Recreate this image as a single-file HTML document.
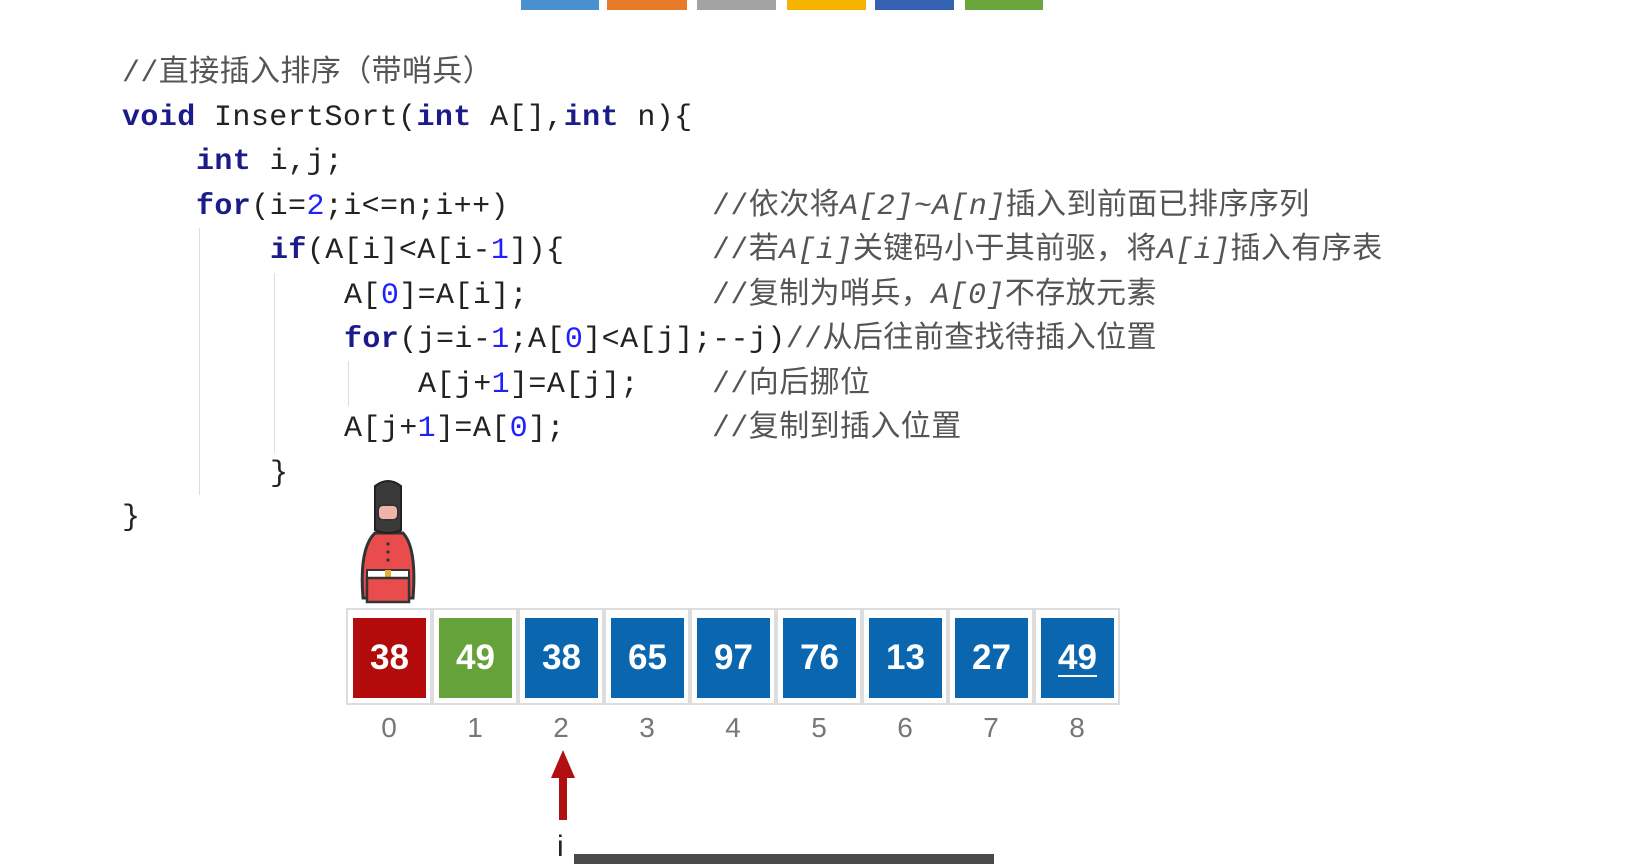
<!DOCTYPE html>
<html><head><meta charset="utf-8">
<style>
*{margin:0;padding:0;box-sizing:border-box}
body{width:1642px;height:864px;background:#fff;position:relative;overflow:hidden;font-family:"Liberation Mono","Noto Sans CJK SC",monospace}
.bar{position:absolute;top:0;height:10px}
.l{position:absolute;font-size:30px;line-height:44px;height:44px;white-space:pre;color:#222;letter-spacing:0.4px}
.k{color:#1b1b8a;font-weight:bold}
.n{color:#2020ff}
.c{color:#555}
.c i{font-style:italic}
.g{position:absolute;width:1px;background:#ddd}
.cell{position:absolute;top:608px;width:86px;height:97px;border:2px solid #ddd;background:#fff}
.cell div{position:absolute;left:5px;top:8px;width:73px;height:80px;color:#fff;font:bold 35px/80px "Liberation Sans",sans-serif;text-align:center}
.idx{position:absolute;top:712px;width:86px;text-align:center;font:28px "Liberation Sans",sans-serif;color:#777}
</style></head><body>
<div class="bar" style="left:521px;width:78px;background:#4a8fd0"></div>
<div class="bar" style="left:607px;width:80px;background:#e87b2a"></div>
<div class="bar" style="left:697px;width:79px;background:#a3a3a3"></div>
<div class="bar" style="left:787px;width:79px;background:#f4b400"></div>
<div class="bar" style="left:875px;width:79px;background:#3462b0"></div>
<div class="bar" style="left:965px;width:78px;background:#6aa63c"></div>

<div class="g" style="left:199px;top:228px;height:267px"></div>
<div class="g" style="left:274px;top:273px;height:180px"></div>
<div class="g" style="left:348px;top:361px;height:45px"></div>

<div class="l c" style="left:122px;top:52px">//直接插入排序（带哨兵）</div>
<div class="l" style="left:122px;top:96px"><span class="k">void</span> InsertSort(<span class="k">int</span> A[],<span class="k">int</span> n){</div>
<div class="l" style="left:196px;top:140px"><span class="k">int</span> i,j;</div>
<div class="l" style="left:196px;top:185px"><span class="k">for</span>(i=<span class="n">2</span>;i&lt;=n;i++)</div>
<div class="l" style="left:270px;top:229px"><span class="k">if</span>(A[i]&lt;A[i-<span class="n">1</span>]){</div>
<div class="l" style="left:344px;top:274px">A[<span class="n">0</span>]=A[i];</div>
<div class="l" style="left:344px;top:318px"><span class="k">for</span>(j=i-<span class="n">1</span>;A[<span class="n">0</span>]&lt;A[j];--j)<span class="c">//从后往前查找待插入位置</span></div>
<div class="l" style="left:418px;top:363px">A[j+<span class="n">1</span>]=A[j];</div>
<div class="l" style="left:344px;top:407px">A[j+<span class="n">1</span>]=A[<span class="n">0</span>];</div>
<div class="l" style="left:270px;top:452px">}</div>
<div class="l" style="left:122px;top:496px">}</div>

<div class="l c" style="left:712px;top:185px">//依次将<i>A[2]~A[n]</i>插入到前面已排序序列</div>
<div class="l c" style="left:712px;top:229px">//若<i>A[i]</i>关键码小于其前驱，将<i>A[i]</i>插入有序表</div>
<div class="l c" style="left:712px;top:274px">//复制为哨兵，<i>A[0]</i>不存放元素</div>
<div class="l c" style="left:712px;top:363px">//向后挪位</div>
<div class="l c" style="left:712px;top:407px">//复制到插入位置</div>

<svg style="position:absolute;left:355px;top:478px" width="70" height="130" viewBox="0 0 70 130">
<path d="M44 30 L44 112" stroke="#333" stroke-width="5"/>
<path d="M8 120 Q4 70 20 55 L48 55 Q62 70 58 120 Z" fill="#e84c4c" stroke="#333" stroke-width="3"/>
<rect x="12" y="92" width="42" height="8" fill="#fff" stroke="#333" stroke-width="2"/>
<rect x="30" y="92" width="6" height="8" fill="#e3b23c"/>
<rect x="12" y="100" width="42" height="24" fill="#e84c4c" stroke="#333" stroke-width="2.5"/>
<path d="M20 8 Q33 -2 46 8 L46 52 Q33 58 20 52 Z" fill="#3a3a3a" stroke="#222" stroke-width="2"/>
<rect x="23" y="27" width="20" height="15" rx="5" fill="#f0b3a8" stroke="#333" stroke-width="2"/>
<circle cx="33" cy="66" r="1.6" fill="#333"/><circle cx="33" cy="74" r="1.6" fill="#333"/><circle cx="33" cy="82" r="1.6" fill="#333"/>
</svg>

<div class="cell" style="left:346px"><div style="background:#b30b0b">38</div></div>
<div class="cell" style="left:432px"><div style="background:#66a23a">49</div></div>
<div class="cell" style="left:518px"><div style="background:#0b66b0">38</div></div>
<div class="cell" style="left:604px"><div style="background:#0b66b0">65</div></div>
<div class="cell" style="left:690px"><div style="background:#0b66b0">97</div></div>
<div class="cell" style="left:776px"><div style="background:#0b66b0">76</div></div>
<div class="cell" style="left:862px"><div style="background:#0b66b0">13</div></div>
<div class="cell" style="left:948px"><div style="background:#0b66b0">27</div></div>
<div class="cell" style="left:1034px"><div style="background:#0b66b0"><span style="border-bottom:2px solid #fff;line-height:34px;display:inline-block">49</span></div></div>

<div class="idx" style="left:346px">0</div>
<div class="idx" style="left:432px">1</div>
<div class="idx" style="left:518px">2</div>
<div class="idx" style="left:604px">3</div>
<div class="idx" style="left:690px">4</div>
<div class="idx" style="left:776px">5</div>
<div class="idx" style="left:862px">6</div>
<div class="idx" style="left:948px">7</div>
<div class="idx" style="left:1034px">8</div>

<svg style="position:absolute;left:548px;top:748px" width="30" height="75">
<polygon points="15,2 27,30 3,30" fill="#b01010"/>
<rect x="11" y="28" width="8" height="44" fill="#b01010"/>
</svg>
<div style="position:absolute;left:557px;top:830px;font:30px 'Liberation Sans',sans-serif;color:#222">i</div>
<div style="position:absolute;left:574px;top:854px;width:420px;height:10px;background:#4a4a4a"></div>
</body></html>
